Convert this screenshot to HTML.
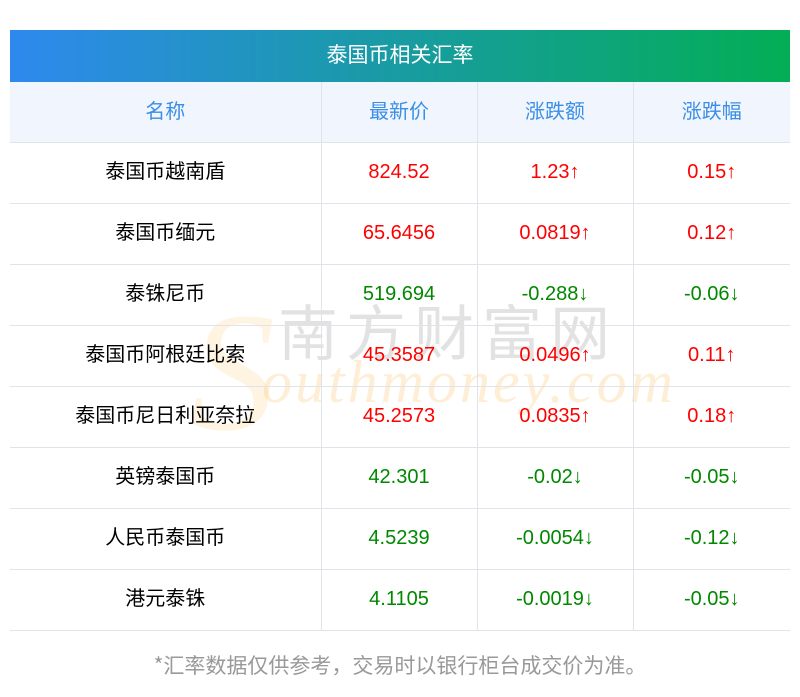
<!DOCTYPE html>
<html><head><meta charset="utf-8"><style>
body{margin:0;width:800px;height:697px;background:#fff;font-family:"Liberation Sans","Noto Sans CJK SC",sans-serif;position:relative;overflow:hidden}
.title{position:absolute;left:10px;top:30px;width:780px;height:52px;background:linear-gradient(90deg,#2e89ee,#03ae55);color:#fff;font-size:21px;line-height:48px;text-align:center;font-family:"Noto Sans CJK SC",sans-serif}
table{position:absolute;left:10px;top:82px;width:780px;border-collapse:collapse;font-size:20px;table-layout:fixed}
td{border:1px solid #e0e3ea;text-align:center;height:61px;padding:0 0 1px 0;box-sizing:border-box;line-height:24px}
td:first-child{font-family:"Noto Sans CJK SC",sans-serif;padding-bottom:5px}
tr td:first-child{border-left:none}
tr td:last-child{border-right:none}
tr.h td{height:60px;background:#f1f6fe;color:#3a8ee6;border-top:none;font-family:"Noto Sans CJK SC",sans-serif;padding-bottom:4px}
.r{color:#f00}.g{color:#008800}
.wm{position:absolute;pointer-events:none}
.foot{position:absolute;top:650px;left:0;width:800px;text-align:center;color:#999;font-size:21px;font-family:"Noto Sans CJK SC",sans-serif;line-height:30px}
</style></head><body>
<div class="title">泰国币相关汇率</div>
<div class="wm" style="left:190px;top:275px;font:italic 170px 'Liberation Serif',serif;color:rgba(253,200,120,0.22)">S</div>
<div class="wm" style="left:278px;top:295px;font-size:60px;letter-spacing:8px;color:rgba(150,150,150,0.28);font-family:'Noto Sans CJK SC',sans-serif;line-height:70px">南方财富网</div>
<div class="wm" style="left:262px;top:348px;font:italic 60px 'Liberation Serif',serif;letter-spacing:3px;color:rgba(253,200,120,0.3)">outhmoney.com</div>
<table>
<colgroup><col style="width:311px"><col style="width:156px"><col style="width:156px"><col style="width:157px"></colgroup>
<tr class="h"><td>名称</td><td>最新价</td><td>涨跌额</td><td>涨跌幅</td></tr>
<tr><td>泰国币越南盾</td><td class="r">824.52</td><td class="r">1.23↑</td><td class="r">0.15↑</td></tr>
<tr><td>泰国币缅元</td><td class="r">65.6456</td><td class="r">0.0819↑</td><td class="r">0.12↑</td></tr>
<tr><td>泰铢尼币</td><td class="g">519.694</td><td class="g">-0.288↓</td><td class="g">-0.06↓</td></tr>
<tr><td>泰国币阿根廷比索</td><td class="r">45.3587</td><td class="r">0.0496↑</td><td class="r">0.11↑</td></tr>
<tr><td>泰国币尼日利亚奈拉</td><td class="r">45.2573</td><td class="r">0.0835↑</td><td class="r">0.18↑</td></tr>
<tr><td>英镑泰国币</td><td class="g">42.301</td><td class="g">-0.02↓</td><td class="g">-0.05↓</td></tr>
<tr><td>人民币泰国币</td><td class="g">4.5239</td><td class="g">-0.0054↓</td><td class="g">-0.12↓</td></tr>
<tr><td>港元泰铢</td><td class="g">4.1105</td><td class="g">-0.0019↓</td><td class="g">-0.05↓</td></tr>
</table>
<div class="foot">*汇率数据仅供参考，交易时以银行柜台成交价为准。</div>
</body></html>
